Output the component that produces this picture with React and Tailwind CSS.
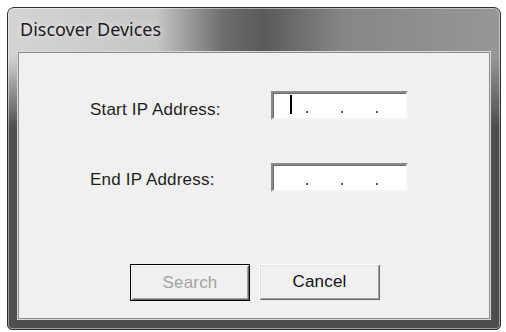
export default function App() {
  return (
    <div className="w-[506px] h-[332px] bg-white pl-[7px] pt-[7px] font-['Liberation_Sans',Arial,sans-serif]">
      <div className="w-[494px] h-[323px] flex flex-col rounded-t-[7px] rounded-b-[5px] border border-[#2e2e2e] shadow-[inset_0_0_0_1px_rgba(255,255,255,0.45)] bg-[linear-gradient(180deg,transparent_0px,transparent_48px,#4e4e4e_120px),linear-gradient(90deg,#d4d4d4_0%,#c6c6c6_30%,#6c6c6c_44%,#5a5a5a_52%,#868686_68%,#979797_100%)]">
        {/* title */}
        <div className="h-[44px] pl-[12px] pt-[11px] text-[18px] leading-[20px] text-[#1b1b1b] font-['Noto_Sans',sans-serif] [text-shadow:0_0_6px_rgba(255,255,255,0.8)]">
          Discover Devices
        </div>

        {/* client area */}
        <div className="mx-[10px] mb-[10px] flex-1 bg-[#f0f0f0] border border-[#8c8c8c] shadow-[0_0_0_1px_#d9d9d9] flex flex-col text-[17px] leading-[20px] text-[#1e1e1e] tracking-[0.2px]">
          <div className="mt-[38px] flex items-start">
            <span className="ml-[71px] mt-[9px] w-[181px]">Start IP Address:</span>
            <IpBox caret />
          </div>
          <div className="mt-[43px] flex items-start">
            <span className="ml-[71px] mt-[7px] w-[181px]">End IP Address:</span>
            <IpBox />
          </div>

          <div className="mt-[72px] ml-[111px] flex gap-[9px]">
            <button className="w-[120px] h-[37px] border border-black bg-[#f0f0f0] text-[#a3a3a3] shadow-[inset_1px_1px_0_#ffffff,inset_-1px_-1px_0_#696969,inset_2px_2px_0_#e3e3e3,inset_-2px_-2px_0_#a0a0a0]">
              Search
            </button>
            <button className="w-[121px] h-[36px] bg-[#f0f0f0] text-[#111] shadow-[inset_1px_1px_0_#ffffff,inset_-1px_-1px_0_#696969,inset_2px_2px_0_#e3e3e3,inset_-2px_-2px_0_#a0a0a0]">
              Cancel
            </button>
          </div>
        </div>
      </div>
    </div>
  );
}

function IpBox({ caret }) {
  return (
    <div className="w-[137px] h-[29px] bg-white border-2 border-t-[#8a8a8a] border-l-[#8a8a8a] border-r-[#f4f4f4] border-b-[#f4f4f4] shadow-[inset_1px_1px_0_#6c6c6c] flex items-start">
      <div className="w-[33px] h-full pl-[17px] pt-[2px]">
        {caret && <div className="w-[2px] h-[19px] bg-black" />}
      </div>
      <Dot />
      <div className="w-[33px]" />
      <Dot />
      <div className="w-[33px]" />
      <Dot />
    </div>
  );
}

function Dot() {
  return <div className="w-[2px] h-[2px] mt-[18px] bg-[#5a5a5a]" />;
}
